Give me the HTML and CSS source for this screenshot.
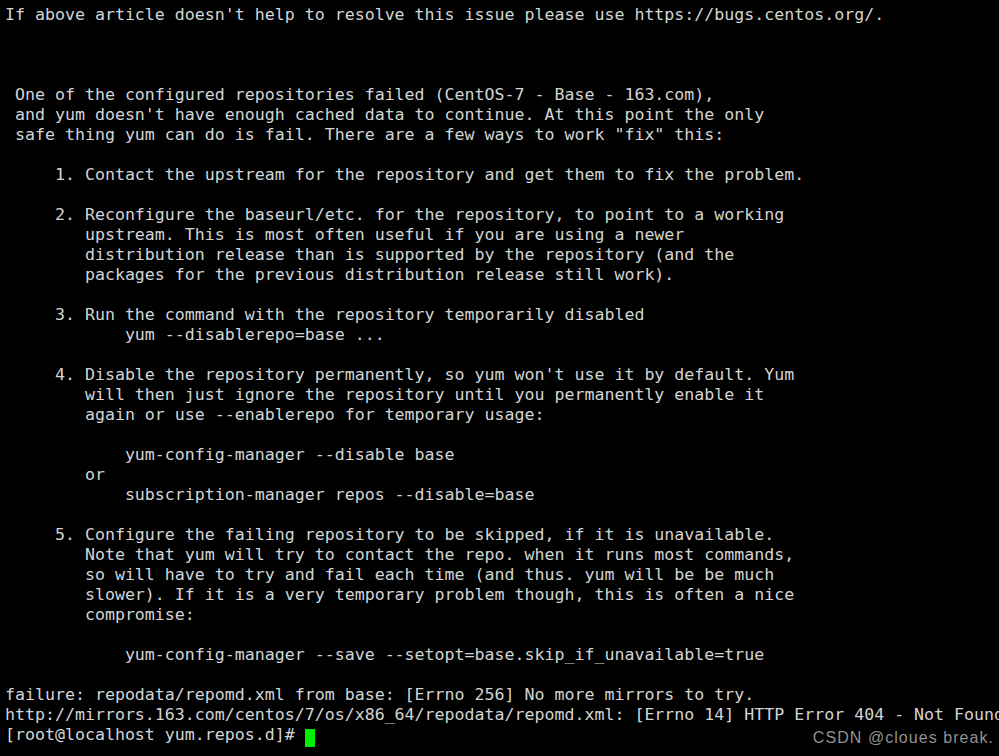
FILE: index.html
```html
<!DOCTYPE html>
<html>
<head>
<meta charset="utf-8">
<link rel="stylesheet" href="styles.css">
</head>
<body>
<div class="term">
<pre class="out">If above article doesn't help to resolve this issue please use https://bugs.centos.org/.



 One of the configured repositories failed (CentOS-7 - Base - 163.com),
 and yum doesn't have enough cached data to continue. At this point the only
 safe thing yum can do is fail. There are a few ways to work "fix" this:

     1. Contact the upstream for the repository and get them to fix the problem.

     2. Reconfigure the baseurl/etc. for the repository, to point to a working
        upstream. This is most often useful if you are using a newer
        distribution release than is supported by the repository (and the
        packages for the previous distribution release still work).

     3. Run the command with the repository temporarily disabled
            yum --disablerepo=base ...

     4. Disable the repository permanently, so yum won't use it by default. Yum
        will then just ignore the repository until you permanently enable it
        again or use --enablerepo for temporary usage:

            yum-config-manager --disable base
        or
            subscription-manager repos --disable=base

     5. Configure the failing repository to be skipped, if it is unavailable.
        Note that yum will try to contact the repo. when it runs most commands,
        so will have to try and fail each time (and thus. yum will be be much
        slower). If it is a very temporary problem though, this is often a nice
        compromise:

            yum-config-manager --save --setopt=base.skip_if_unavailable=true

failure: repodata/repomd.xml from base: [Errno 256] No more mirrors to try.
http://mirrors.163.com/centos/7/os/x86_64/repodata/repomd.xml: [Errno 14] HTTP Error 404 - Not Found
[root@localhost yum.repos.d]# <span class="cursor"> </span></pre>
<div class="mark">CSDN @cloues break.</div>
</div>
</body>
</html>
```
FILE: styles.css
```css
html, body {
  margin: 0;
  padding: 0;
  background: #000;
}
.term {
  position: relative;
  width: 999px;
  height: 756px;
  overflow: hidden;
  background: #000;
}
.out {
  margin: 0;
  padding: 5px 0 0 5px;
  font-family: "DejaVu Sans Mono", monospace;
  font-size: 16.6px;
  line-height: 20px;
  color: #d4d4d4;
  white-space: pre;
}
.cursor {
  display: inline-block;
  width: 10px;
  height: 18px;
  vertical-align: -4px;
  background: #00f000;
}
.mark {
  position: absolute;
  right: 5px;
  top: 728px;
  font-family: "Liberation Sans", Arial, sans-serif;
  font-size: 16px;
  letter-spacing: 1.05px;
  line-height: 20px;
  color: rgba(185, 185, 185, 0.8);
}
```
